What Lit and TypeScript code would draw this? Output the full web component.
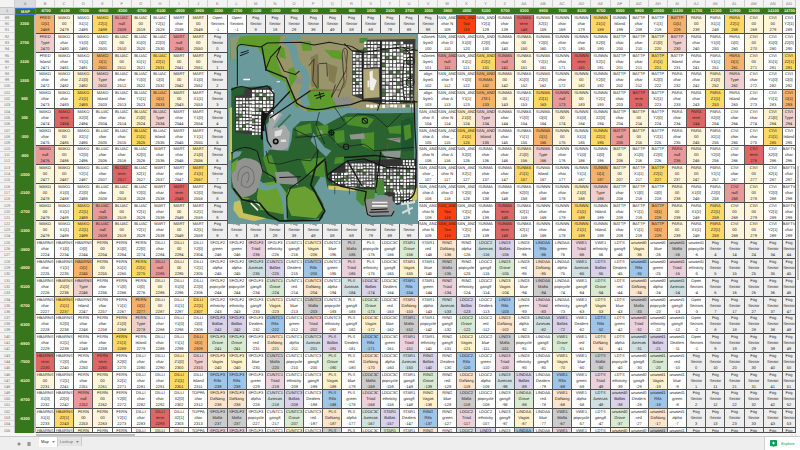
import { LitElement, html, css, svg, nothing } from "lit";
import { customElement } from "lit/decorators.js";
import { classMap } from "lit/directives/class-map.js";

interface Cell {
  name: string;
  field: string;
  offset: number;
  kind: string;
}

interface RecordDef {
  start: number;
  name: string;
}

const COLUMN_COUNT = 40;
const BLOCK_COUNT = 22;
const FIRST_SHEET_ROW = 89;

const WEST_UPPER: RecordDef[] = [
  { start: 2440, name: "FRED" },
  { start: 2472, name: "MAKO" },
  { start: 2504, name: "BLUAC" },
  { start: 2536, name: "MART" },
];
const WEST_LOWER: RecordDef[] = [
  { start: 2216, name: "HBARNS" },
  { start: 2248, name: "FERN" },
  { start: 2280, name: "DILLI" },
  { start: 2312, name: "TOPFA" },
];
const EAST: RecordDef[] = [
  { start: 136, name: "SUNMA" },
  { start: 168, name: "SUNNN" },
  { start: 200, name: "BATTP" },
  { start: 232, name: "PARA" },
  { start: 264, name: "CIVI" },
  { start: 296, name: "BAYTV" },
];
const GANG_ZONES = [
  "SFGLF2", "SFGLF3", "CUNTC1", "CUNTC3", "PLS", "LDOC3C", "STAR1", "RING",
  "LDOC2", "LIND3", "LINDAA", "VWE1", "LDTS", "unused0", "unused1",
];
const GANG_FIELDS = [
  "Ballas", "Grove", "Vagos", "Rifa", "DaNang", "Mafia", "Triad", "Aztecas",
  "gang8", "gang9", "Dealers", "red", "blue", "green", "alpha", "popcycle", "ethnicity",
];

function zoneCell(defs: RecordDef[], offset: number): Cell {
  const def = [...defs].reverse().find((d) => d.start <= offset)!;
  const at = offset - def.start;
  const length = def.name.length;
  const make = (field: string, kind = "") => ({ name: def.name, field, offset, kind });
  if (at < 16) {
    const inName = at % 8;
    if (inName < length) return make("char");
    if (inName === length) return at < 8 ? make("null", "null") : make("term", "term");
    return make("00", "zero");
  }
  if (at < 28) {
    const axis = ["X1", "Y1", "Z1", "X2", "Y2", "Z2"][(at - 16) >> 1];
    const field = `${axis}[${at % 2}]`;
    const kind = field === "Z1[0]" ? "pale" : axis.startsWith("Z") && at % 2 ? "gold" : "";
    return make(field, kind);
  }
  return [make("O[0]"), make("O[1]", "orange"), make("Type", "type"), make("Island")][at - 28];
}

function fog(sector: number, offset = sector): Cell {
  return sector < 0
    ? { name: "Open", field: "Sectors", offset, kind: "" }
    : { name: "Fog", field: "Sector", offset, kind: "fog" };
}

function headerCell(offset: number): Cell {
  const make = (name: string, field: string, kind = "") => ({ name, field, offset, kind });
  if (offset < 104) {
    return make(offset < 102 ? "nZones" : "align", `byte${offset % 2}`);
  }
  if (offset < 120) {
    const letter = "SAN_AND"[(offset - 104) % 8];
    if (letter) return make("SAN_AND", `char ${letter}`);
    return offset < 112 ? make("SAN_AND", "null", "null") : make("SAN_AND", "Taxi", "taxi");
  }
  if (offset < 132) return { ...zoneCell([{ start: 104, name: "SAN_AND" }], offset) };
  return [
    make("SAN_AND", "SUNMA", "orange"),
    make("SAN_AND", "JTE1", "orange"),
    make("SAN_AND", "Type", "type"),
    make("SAN_AND", "Island", "type"),
  ][offset - 132];
}

function gangCell(offset: number): Cell {
  if (offset >= -4) return fog(offset < 0 ? -1 : offset, offset);
  const at = offset + 242 + 17;
  const field = GANG_FIELDS[at % 17];
  return {
    name: GANG_ZONES[Math.floor(at / 17)],
    field,
    offset,
    kind: at % 17 < 8 ? field.toLowerCase() : "",
  };
}

function cellAt(block: number, column: number): Cell | null {
  if (block >= 12) {
    const step = block - 12;
    if (column < 9) return zoneCell(WEST_LOWER, 2224 + column * 10 + step);
    return gangCell(-246 + Math.max(column - 10, 0) * 10 + step);
  }
  const step = Math.min(block, 10);
  if (column < 9) return zoneCell(WEST_UPPER, 2469 + column * 10 + step);
  if (column < 20) {
    if (block === 0) return column < 11 ? fog(-1) : fog((column - 10) * 10 - 1);
    if (column === 9) return fog(step - 1);
    return block === 11 ? fog((column - 9) * 10 - 1) : null;
  }
  const offset = 99 + (column - 20) * 10 + step;
  if (offset === 99) return fog(99);
  return offset < 136 ? headerCell(offset) : zoneCell(EAST, offset);
}

function columnLetter(index: number): string {
  const letter = String.fromCharCode(65 + (index % 26));
  return index < 26 ? letter : "A" + letter;
}

/* Deterministic noise, so that the city blocks are the same on every paint. */
function noise(seed: number) {
  let s = seed;
  return () => {
    s = (s * 16807) % 2147483647;
    return s / 2147483647;
  };
}

function cityBlocks(x: number, y: number, w: number, h: number, seed: number, step = 11) {
  const next = noise(seed);
  const out = [];
  for (let by = y; by < y + h; by += step) {
    for (let bx = x; bx < x + w; bx += step) {
      const tone = next();
      const fill = tone < 0.8 ? "#fbfbfa" : tone < 0.9 ? "#b4b4b4" : "#4c7d3a";
      const bw = step - 2 - Math.floor(next() * 2);
      const bh = step - 2 - Math.floor(next() * 3);
      out.push(svg`<rect x=${bx} y=${by} width=${bw} height=${bh} fill=${fill} />`);
    }
  }
  return out;
}

@customElement("world-map")
export class WorldMap extends LitElement {
  static styles = css`
    :host { display: block; }
    svg { display: block; width: 100%; height: 100%; }
  `;

  render() {
    return html`<svg viewBox="82 101 571 570" preserveAspectRatio="none" role="img" aria-label="Map of the island">
      <rect x="82" y="101" width="571" height="570" fill="#6a9a9c" />

      <path fill="#609c2c" d="M90 180 L88 112 L135 107 L270 104 L330 112 L330 150 L262 150 L232 160 L250 212 L285 262 L310 320 L288 322 L262 280 L255 245 L212 225 L194 205 L188 170 L170 140 L112 136 L104 178Z" />
      <path fill="#8d977a" d="M88 112 L118 107 L108 132 L106 176 L92 180Z" />
      <path fill="#99956a" d="M240 108 L260 104 L645 104 L650 200 L648 322 L480 326 L398 312 L320 334 L296 322 L272 268 L240 212 L226 170 L236 130Z" />
      <path fill="#609c2c" d="M308 288 L340 262 L392 270 L398 300 L450 320 L320 334Z M262 206 L280 200 L290 232 L268 262Z M300 124 L330 122 L334 150 L306 152Z M370 148 L420 150 L424 178 L394 172Z M230 136 L250 142 L256 176 L236 170Z" />
      <path fill="none" stroke="#6a9a9c" stroke-width="23" d="M250 118 Q278 130 280 160 T304 208 T306 282 L318 318" />
      <path fill="none" stroke="#6a9a9c" stroke-width="20" d="M262 110 L300 106" />
      <path fill="#8b8b88" d="M396 292 L444 288 L460 304 L440 320 L408 316Z M284 232 L306 234 L302 250 L286 250Z" />
      <path fill="#857b50" d="M330 170 L352 160 L354 262 L332 258Z M382 190 L410 200 L402 250 L384 240Z" />
      <path fill="#fff" d="M128 235 h20 v4 h-20z M228 242 h10 v3 h-10z" />

      <path fill="#27602f" d="M92 262 L210 256 L222 300 L214 356 L186 380 L192 452 L92 452Z" />
      <path fill="#3a3a3a" d="M102 286 L128 282 L132 264 L214 262 L220 340 L186 366 L188 404 L104 396Z" />
      <g>${cityBlocks(106, 292, 44, 100, 17, 10)}${cityBlocks(154, 268, 64, 72, 29, 11)}${cityBlocks(154, 346, 30, 54, 31, 10)}</g>
      <path fill="#c9c15a" d="M86 322 L94 320 L94 480 L86 478Z" />
      <path fill="#a6a8a8" d="M206 346 L230 334 L246 340 L214 384 L252 372 L268 396 L262 440 L238 452 L206 440 L200 396Z" />
      <path fill="#dedede" d="M214 348 L236 338 L222 360Z M222 392 L246 386 L240 404 L222 408Z M240 416 h16 v8 h-16z" />
      <path fill="#131313" d="M182 330 L202 340 L190 372 L196 424 L180 414Z" />
      <circle cx="225" cy="422" r="9" fill="#111" /><circle cx="225" cy="422" r="4" fill="#999" />
      <path stroke="#3d6b44" stroke-width="5" d="M232 380 L270 342" />

      <path fill="#2a6330" d="M276 384 L300 362 L352 360 L372 374 L412 352 L440 338 L560 338 L640 336 L640 560 L380 560 L370 510 L340 560 L368 610 L366 652 L250 662 L128 640 L120 600 L92 560 L92 454 L194 446 L262 450 L272 420Z" />
      <path fill="#6a9a9c" d="M338 396 Q356 420 372 440 L392 450 L376 468 L352 446 L330 420Z M186 392 L202 390 L204 450 L190 470Z M98 452 L124 452 L116 466 L96 476Z" />
      <path fill="#4c8d2c" d="M284 380 L330 368 L334 396 L292 404Z M344 376 L382 372 L384 402 L352 410Z M430 350 L492 346 L520 356 L500 382 L440 372Z M400 392 L430 388 L432 424 L404 430Z M476 400 L520 394 L520 450 L484 436Z M560 380 L600 374 L604 400 L566 398Z M300 476 L370 470 L372 530 L318 520Z M186 470 L212 462 L236 530 L206 530Z M404 470 L430 468 L428 486 L400 490Z" />
      <path fill="#6aa032" d="M176 548 L230 540 L258 576 L248 640 L178 626 L168 590Z M262 566 L312 556 L350 580 L366 626 L346 652 L272 644 L256 606Z" />
      <path fill="#8f9490" d="M446 402 L490 398 L492 414 L450 416Z M350 390 L364 388 L366 402Z M540 452 L600 450 L598 470 L560 476Z M222 514 L262 512 L288 530 L292 552 L230 548Z M556 414 L600 410 L598 426Z" />
      <path fill="#6a9a9c" d="M172 532 Q196 564 230 546 Q262 560 258 656 L250 656 Q248 590 226 560 Q190 580 166 556Z" />

      <path fill="#92928f" d="M92 516 Q94 484 128 472 Q168 470 186 500 Q182 540 166 572 Q150 590 120 590 Q92 568 92 516Z" />
      <path fill="none" stroke="#707070" stroke-width="3" d="M112 540 Q108 500 136 496 Q168 506 158 546 Q140 570 122 552 Q120 516 142 514 Q150 530 138 546" />
      <path fill="#6aa032" d="M92 488 L112 474 L104 508 L92 520Z M100 560 L122 588 L148 592 L130 602 L112 592Z" />
      <path fill="#c9c15a" d="M100 604 L118 598 L128 636 L180 648 L198 652 L160 660 L116 650 L98 626Z" />
      <path stroke="#eee" stroke-width="5" d="M150 606 L172 628 M160 600 L178 614" />

      <path fill="#333" d="M380 540 L390 514 L430 488 L480 478 L646 474 L648 570 L640 600 L588 612 L560 584 L500 570 L460 560 L400 552Z" />
      <g>${cityBlocks(394, 516, 44, 34, 41, 9)}${cityBlocks(434, 488, 90, 72, 43, 9)}${cityBlocks(528, 496, 112, 74, 47, 10)}${cityBlocks(582, 572, 60, 30, 51, 9)}${cityBlocks(606, 478, 36, 18, 53, 9)}</g>
      <path fill="#4a8a34" d="M520 538 L548 536 L552 580 L530 584Z M468 566 L524 566 L520 600 L486 616 L466 596Z" />
      <path fill="#d2c862" d="M382 554 L462 560 L462 570 L384 566Z M632 580 L648 560 L648 596 L636 604Z" />
      <path fill="#8e8e8e" d="M492 596 L574 586 L580 640 L506 646 L492 632Z" />
      <path fill="none" stroke="#111" stroke-width="3" d="M492 598 L500 640 L512 646 L572 644 L580 630 M510 626 L560 624 M506 634 L564 632" />
      <path fill="#eee" d="M514 602 h46 v5 h-46z M514 612 h46 v5 h-46z" />
      <path fill="none" stroke="#d8dddd" stroke-width="6" d="M600 610 L640 604 M604 636 L636 620 M620 606 L626 640" />
      <path stroke="#27393c" stroke-width="2" d="M402 558 v22 M446 560 v20" />

      <path fill="#4d8640" d="M476 114 L500 112 L500 128 L476 128Z M480 204 L494 206 L492 226 L480 224Z" />
      <path fill="#3a3a3a" d="M454 150 L486 148 L500 118 L644 116 L640 308 L538 312 L494 300 L454 284Z" />
      <g>${cityBlocks(456, 154, 26, 124, 61, 10)}${cityBlocks(490, 124, 48, 80, 67, 10)}${cityBlocks(544, 124, 58, 180, 71, 11)}${cityBlocks(608, 132, 30, 166, 73, 10)}</g>
      <path fill="#b0a878" d="M488 206 L534 204 L536 290 L488 294Z" />
      <path fill="#f0f0ec" d="M506 214 L516 210 L516 232 L528 240 L518 270 L508 268Z M500 240 h6 v20 h-6z" />
      <g>${cityBlocks(496, 312, 142, 9, 79, 12)}</g>
      <path fill="#1d5630" d="M600 360 L636 350 L638 450 L602 452Z" />
      <path fill="#4c8d2c" d="M608 376 L628 370 L632 410 L612 420Z" />

      <g fill="none" stroke="#171717" stroke-width="3" stroke-linejoin="round">
        <path d="M110 256 L110 150 Q106 134 124 132 L180 140 L200 128 L300 126 L340 134 L386 126 L452 138 L484 156" />
        <path d="M184 140 L196 208 L256 232 L270 266 L288 308 Q330 340 400 318 L450 312 L484 300 L650 304" stroke-width="4" />
        <path d="M194 210 L210 170 L240 138 L228 168 L250 212 L284 222 L296 212" />
        <path d="M324 196 L340 176 L336 240 L350 264 M354 190 L378 188 L380 228 M352 262 L352 192 M404 252 L392 290 L436 210 L440 152 Q430 130 424 160 L430 246 L412 290" stroke-width="2" />
        <path d="M484 156 L486 300 M484 156 L600 140 L650 150 M540 120 L540 300 L530 330 M452 150 L484 156 M430 130 L452 150" />
        <path d="M92 268 Q120 250 150 266 L200 256 L220 280 L218 320 L190 350 L200 420 L212 440" stroke-width="4" />
        <path d="M200 344 L268 272 M208 352 L330 270" stroke-width="4" />
        <path d="M356 334 L346 372 L372 430 M400 318 L430 362 M380 394 L420 380 L470 340 L520 344 L560 380 L600 340" stroke-width="2" />
        <path d="M280 386 L330 410 L380 400 L420 440 L490 430 L520 450 L640 440 M284 410 L340 406 L350 450 L330 480 L290 476 L236 490 L204 486 L196 450" stroke-width="2" />
        <path d="M92 458 Q130 426 170 452 L186 510 L220 530 L226 546 M352 446 L346 500 L300 540 L270 560 L258 590 L260 650 M236 530 L300 528" />
        <path d="M98 562 L124 596 L176 606 L204 640 L236 660 L356 658 L372 630 L344 576 L330 552 L344 500 L374 474" stroke-width="5" />
        <path d="M374 480 L380 532 L420 556 L496 572 L492 600 M380 522 L440 480 L490 474 L560 500 L648 504 M440 480 L484 556 M540 452 L526 560 M430 470 L520 464 L600 474" stroke-width="4" />
        <path d="M640 300 L642 380 L646 450 L644 560 Q640 600 600 600" stroke-width="4" />
        <circle cx="628" cy="182" r="12" /><circle cx="628" cy="245" r="12" />
        <path d="M606 140 L628 160 L630 300 M612 300 Q600 250 610 180" />
      </g>
      <g fill="none" stroke="#7b4a3c" stroke-width="2">
        <path d="M324 270 L420 268 Q440 260 438 200 L430 150" />
        <path d="M560 450 Q554 426 580 416 L600 414 M632 300 L632 360" />
      </g>
      <g fill="none" stroke="#15181a" stroke-width="3">
        <circle cx="392" cy="396" r="7" /><circle cx="492" cy="360" r="8" /><circle cx="436" cy="438" r="8" />
        <path d="M382 396 h20 M392 386 v20 M484 352 l16 16 M120 158 l24 -8 M118 166 l26 -10 M340 286 l30 -8 M346 294 l26 -10 M356 274 l4 22" />
      </g>
    </svg>`;
  }
}

@customElement("app-root")
export class AppRoot extends LitElement {
  static styles = css`
    :host {
      --columns: 15px 21px repeat(39, minmax(0, 19fr)) minmax(0, 13fr);
      --blocks: repeat(22, minmax(0, 15fr)) minmax(0, 4fr);
      display: flex;
      flex-direction: column;
      height: 100vh;
      overflow: hidden;
      background: #eee;
      color: #222;
      font: 4px/6px "Liberation Sans", Arial, sans-serif;
      text-rendering: geometricPrecision;
    }
    .workspace { flex: 1; min-height: 0; display: flex; }
    .sheet { position: relative; flex: 1; min-width: 0; display: flex; flex-direction: column; }
    .grid { flex: 1; min-height: 0; display: flex; flex-direction: column; }
    .row { display: grid; grid-template-columns: var(--columns); min-height: 0; }
    th, td { padding: 0; text-align: center; font-weight: 400; overflow: hidden; white-space: nowrap; box-sizing: border-box; }
    .letters { height: 8px; line-height: 8px; }
    .letters th { background: #f3f3f3; color: #777; border-right: 1px solid #d0d0d0; border-bottom: 1px solid #c4c4c4; }
    .letters .active { background: #d9dbde; }
    .coords { height: 7px; line-height: 6px; }
    .coords th { background: #38761d; color: #fff2cc; font-weight: 700; border-bottom: 1px solid #bcbcbc; }
    .coords .number { background: #dcdee0; color: #777; font-weight: 400; }
    .coords .corner { border: 1px solid #3c78d8; line-height: 5px; }
    .body { flex: 1; min-height: 0; display: grid; grid-template-rows: var(--blocks); }
    .line { height: 6px; display: flex; justify-content: center; }
    .number { background: #f3f3f3; color: #777; border-right: 1px solid #c4c4c4; }
    .body .number .line { box-shadow: inset 0 -1px #dadada; }
    .latitude { display: flex; align-items: center; justify-content: center; background: #38761d; color: #fff2cc; font-weight: 700; border-right: 2px solid #bcbcbc; }
    .cell { background: #fff; border-right: 1px solid #5a5a5a; border-bottom: 1px solid #4c4c4c; }
    .null { background: #ea9999; }
    .term { background: #e06666; }
    .taxi { background: #ff4010; }
    .zero { background: #fef5da; }
    .pale { background: #fff2cc; }
    .gold { background: #ffd966; }
    .orange { background: #f6b26b; }
    .type { background: #f0d0cf; }
    .fog { background: #eee; }
    .ballas { background: #d9d2e9; }
    .grove { background: #d9ead3; }
    .vagos { background: #fff2cc; }
    .rifa { background: #9fc5e8; }
    .danang { background: #fce5cd; }
    .mafia { background: #ccc; }
    .triad { background: #ead1dc; }
    .aztecas { background: #d0e0e3; }
    .overlay {
      position: absolute;
      inset: 15px 0 0;
      display: grid;
      grid-template-columns: var(--columns);
      grid-template-rows: var(--blocks);
      pointer-events: none;
    }
    .map { grid-column: 13 / 23; grid-row: 2 / 12; margin: 0 1px -3px 0; min-height: 0; }
    .vertical { width: 4px; background: #f6f6f6; display: flex; flex-direction: column; }
    .vertical .before { flex: 166; }
    .vertical .thumb { flex: 114; margin: 0 1px; background: #c4c4c4; }
    .vertical .after { flex: 153; }
    .horizontal { height: 4px; display: flex; background: #f6f6f6; border-bottom: 1px solid #c8c8c8; box-sizing: border-box; padding-left: 36px; }
    .horizontal .thumb { width: 13%; margin-top: 1px; background: #c0c0c0; }
    .arrows { margin-left: auto; display: flex; gap: 2px; padding-right: 4px; color: #888; line-height: 3px; }
    .bar { display: flex; align-items: stretch; height: 13px; padding-left: 14px; background: #eee; }
    button { font: inherit; border: 0; padding: 0; margin: 0; background: none; color: #555; cursor: pointer; display: flex; align-items: center; justify-content: center; gap: 3px; }
    .tool { width: 10px; }
    .tool svg { width: 4px; height: 4px; }
    .caret { width: 3px; height: 2px; }
    .tabs { display: flex; margin-left: 5px; align-items: flex-start; }
    .tab { height: 9px; padding: 0 2px; background: #e4e4e4; border-right: 1px solid #ccc; color: #777; }
    .tab.current { height: 10px; background: #fff; color: #222; }
    .explore { margin-left: auto; width: 36px; background: #fff; color: #0f9d58; gap: 4px; border-left: 1px solid #d0d0d0; }
    .explore svg { width: 7px; height: 7px; }
  `;

  private renderCell(block: number, column: number) {
    const cell = cellAt(block, column);
    if (!cell) return html`<td></td>`;
    return html`<td class=${classMap({ cell: true, [cell.kind || "plain"]: true })}>
      <span class="line">${cell.name}</span>${block < BLOCK_COUNT
        ? html`<span class="line">${cell.field}</span><span class="line">${cell.offset}</span>`
        : nothing}
    </td>`;
  }

  private renderBlock(block: number) {
    const first = FIRST_SHEET_ROW + block * 3;
    const numbers = block < BLOCK_COUNT ? [first, first + 1, first + 2] : [first];
    return html`<tr class="row">
      <th class="number">${numbers.map((n) => html`<span class="line">${n}</span>`)}</th>
      <th class="latitude" scope="row">${block < BLOCK_COUNT ? 3300 - block * 600 : nothing}</th>
      ${Array.from({ length: COLUMN_COUNT }, (_, column) => this.renderCell(block, column))}
    </tr>`;
  }

  render() {
    const columns = Array.from({ length: COLUMN_COUNT }, (_, i) => i);
    const caret = html`<svg class="caret" viewBox="0 0 6 4" aria-hidden="true"><path d="M0 0h6L3 4z" fill="#888" /></svg>`;
    return html`
      <div class="workspace">
        <div class="sheet">
          <table class="grid">
            <thead>
              <tr class="row letters">
                <th></th>
                <th class="active">A</th>
                ${columns.map((i) => html`<th>${columnLetter(i + 1)}</th>`)}
              </tr>
              <tr class="row coords">
                <th class="number">1</th>
                <th class="corner">MAP</th>
                ${columns.map((i) => html`<th scope="col">${-8700 + i * 600}</th>`)}
              </tr>
            </thead>
            <tbody class="body">
              ${Array.from({ length: BLOCK_COUNT + 1 }, (_, block) => this.renderBlock(block))}
            </tbody>
          </table>
          <div class="overlay"><world-map class="map"></world-map></div>
        </div>
        <div class="vertical"><span class="before"></span><span class="thumb"></span><span class="after"></span></div>
      </div>
      <div class="horizontal"><span class="thumb"></span><span class="arrows"><span>‹</span><span>›</span></span></div>
      <div class="bar">
        <button class="tool" aria-label="Add sheet">
          <svg viewBox="0 0 10 10"><path d="M5 1v8M1 5h8" stroke="#555" stroke-width="2" /></svg>
        </button>
        <button class="tool" aria-label="All sheets">
          <svg viewBox="0 0 10 10"><path d="M1 2h8M1 5h8M1 8h8" stroke="#555" stroke-width="2" /></svg>
        </button>
        <div class="tabs">
          <button class="tab current">Map ${caret}</button>
          <button class="tab">Lookup ${caret}</button>
        </div>
        <button class="explore">
          <svg viewBox="0 0 18 18" aria-hidden="true">
            <path d="M2 0h14a2 2 0 0 1 2 2v12a2 2 0 0 1-2 2h-5l-2 2-2-2H2a2 2 0 0 1-2-2V2a2 2 0 0 1 2-2z" fill="#0f9d58" />
            <path d="M9 3l1.500 3.500L14 8l-3.500 1.500L9 13l-1.500-3.500L4 8l3.500-1.500z" fill="#fff" />
          </svg>
          Explore
        </button>
      </div>
    `;
  }
}
